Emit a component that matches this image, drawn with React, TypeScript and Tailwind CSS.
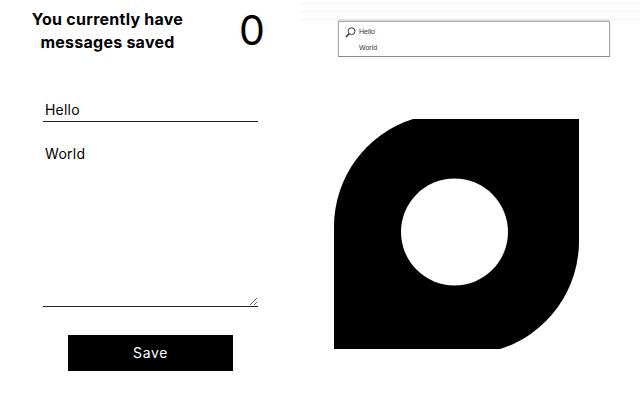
import React from 'react';

const App = () => {
  return (
    <div className="flex w-[640px] h-[400px] bg-white overflow-hidden font-['Inter',sans-serif] text-black">
      <div className="w-[300px] shrink-0 flex flex-col">
        <div className="flex items-start pt-[8px] h-[64px]">
          <h1 className="w-[215px] text-center text-[16px] leading-[23px] font-bold tracking-[0.25px] whitespace-nowrap">
            You currently have
            <br />
            messages saved
          </h1>
          <span className="ml-[24px] text-[41px] leading-[44px]">0</span>
        </div>
        <div className="flex flex-col pl-[43px] pt-[33px]">
          <input
            defaultValue="Hello"
            className="w-[215px] h-[25px] px-[2px] text-[14px] tracking-[0.2px] border-b border-[#222] outline-none"
          />
          <textarea
            defaultValue="World"
            className="w-[215px] h-[163px] mt-[22px] px-[2px] text-[14px] tracking-[0.3px] leading-[20px] border-b border-[#222] outline-none"
          />
        </div>
        <button className="ml-[68px] mt-[28px] w-[165px] h-[36px] pb-[2px] bg-black text-white text-[14px] tracking-[0.6px]">
          Save
        </button>
      </div>
      <div className="flex-1 flex flex-col">
        <div className="flex flex-col pt-[3px]">
          <div className="h-[8px] border-t border-[#f5f5f5]" />
          <div className="h-[8px] border-t border-[#f5f5f5]" />
          <div className="h-[1px] bg-[#f5f5f5]" />
        </div>
        <div className="ml-[38px] mt-[1px] w-[272px] h-[36px] border border-[#aaa] border-b-[#888] shadow-[0_-1px_2px_rgba(0,0,0,0.2)] flex flex-col font-['Liberation_Sans',sans-serif] text-[7px] text-[#333]">
          <div className="flex items-center h-[20px] pl-[6px]">
            <svg width="11" height="11" viewBox="0 0 11 11" fill="none" stroke="#333">
              <circle cx="6.6" cy="4.2" r="3.4" strokeWidth="1" />
              <path d="M4 6.8 L1 10" strokeWidth="1.6" />
            </svg>
            <span className="ml-[3px]">Hello</span>
          </div>
          <div className="pl-[20px] leading-[12px]">World</div>
        </div>
        <svg className="ml-[34px] mt-[62px]" width="245" height="230" viewBox="0 0 245 230">
          <path d="M0 108 A113 113 0 0 1 79 0 L245 0 L245 121 A113 113 0 0 1 166 230 L0 230 Z" fill="#000" />
          <circle cx="120.5" cy="113" r="53.5" fill="#fff" />
        </svg>
      </div>
    </div>
  );
};

export default App;
